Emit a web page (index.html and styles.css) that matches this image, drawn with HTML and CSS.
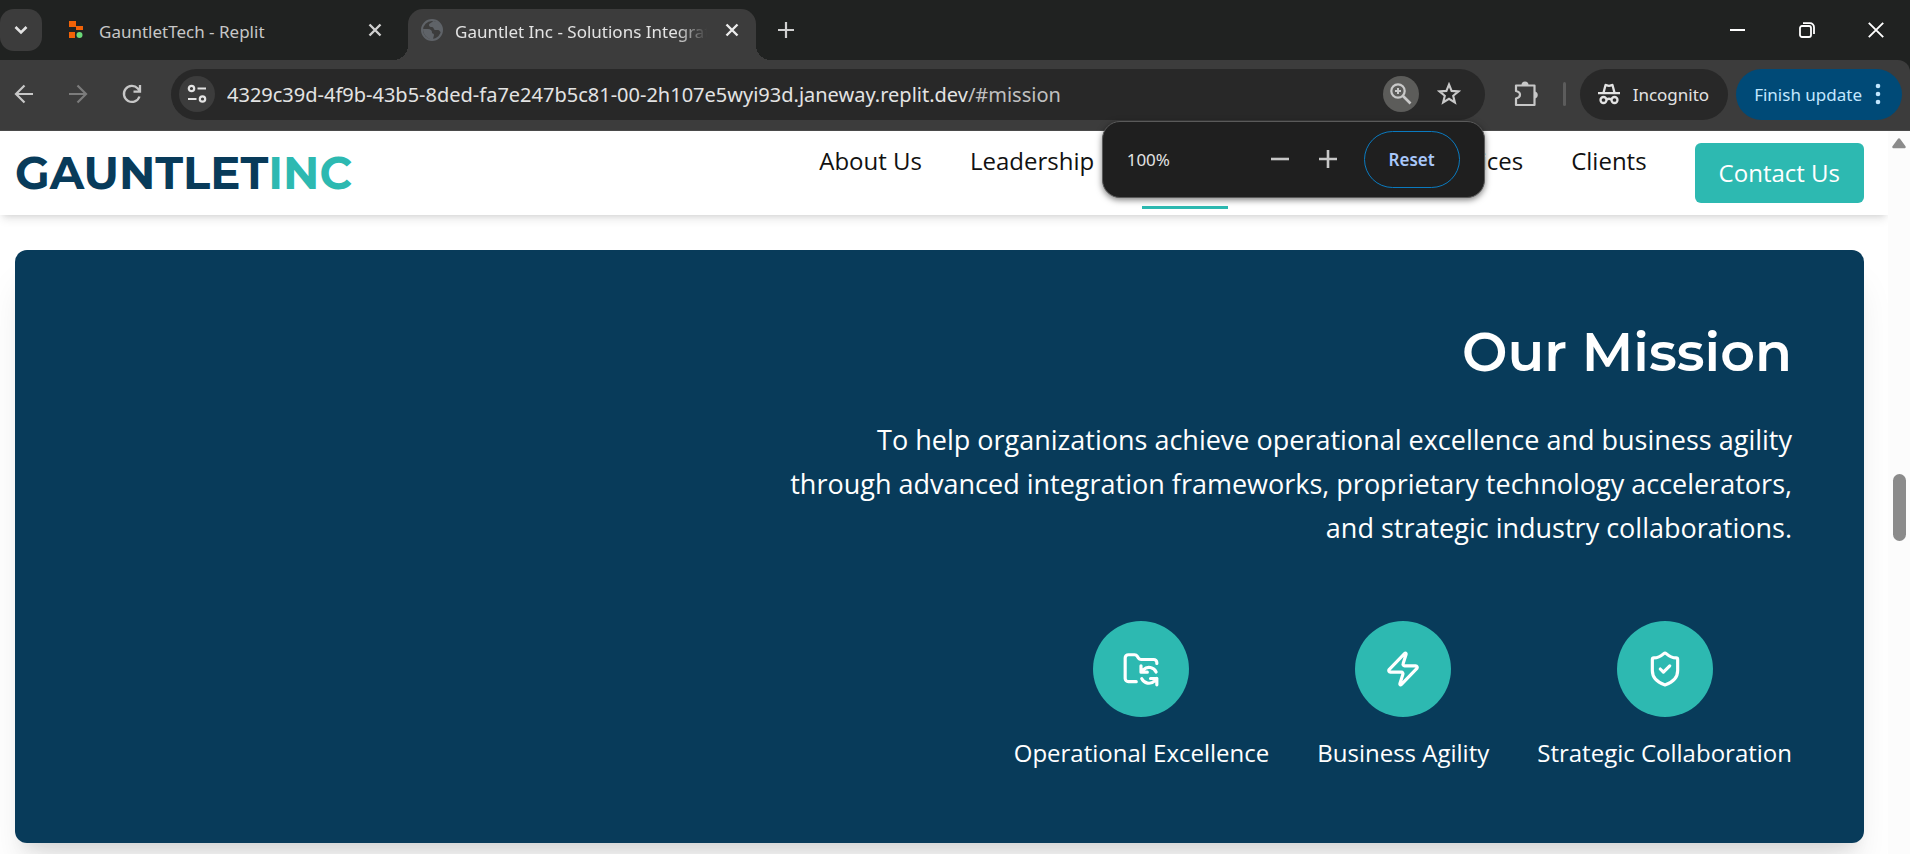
FILE: index.html
```html
<!DOCTYPE html>
<html lang="en">
<head>
<meta charset="utf-8">
<title>Gauntlet Inc - Solutions Integration</title>
<link rel="stylesheet" href="styles.css">
</head>
<body>
<div class="window">
  <div class="tab-strip">
    <button class="tab-search" aria-label="Search tabs"><svg width="14" height="14" viewBox="0 0 14 14"><path d="M1.5 4 7 9.500 12.500 4" fill="none" stroke="#e3e3e3" stroke-width="2.600"/></svg></button>
    <div class="tab">
      <svg class="favicon" width="22" height="22" viewBox="0 0 22 22"><path fill="#f26207" d="M4 2h7v6H4zM11 7h7v4h-7zM4 13h6v6H4z"/><circle cx="14.500" cy="16" r="3" fill="#6bd878"/></svg>
      <span class="tab-title">GauntletTech - Replit</span>
      <button class="tab-close" aria-label="Close tab"><svg width="14" height="14" viewBox="0 0 14 14"><path d="M1.500 1.500l11 11M12.500 1.500l-11 11" stroke="#d0d0d0" stroke-width="2.400"/></svg></button>
    </div>
    <div class="tab tab-active">
      <svg class="favicon" width="22" height="22" viewBox="0 0 22 22"><circle cx="11" cy="11" r="10" fill="#3c3c3c" stroke="#5f6368" stroke-width="2"/><path fill="#5f6368" d="M12 2c-1 2-4 2-4 4 0 1.500 1 2 3 2s1.500 3 3 3h3c1.500 0 2 2 3 2 1-4 0-8-4-10zM2 10h5c2.500 0 4 1.500 4 3.500 0 1.500 2 .5 2 2.500l-1 4c-5 1-10-4-10-10z"/></svg>
      <span class="tab-title">Gauntlet Inc - Solutions Integration</span>
      <button class="tab-close" aria-label="Close tab"><svg width="14" height="14" viewBox="0 0 14 14"><path d="M1.500 1.500l11 11M12.500 1.500l-11 11" stroke="#ececec" stroke-width="2.400"/></svg></button>
    </div>
    <button class="new-tab" aria-label="New tab"><svg width="16" height="16" viewBox="0 0 16 16"><path d="M8 0v16M0 8h16" stroke="#d0d0d0" stroke-width="2.200"/></svg></button>
    <div class="window-controls">
      <button aria-label="Minimize"><svg width="16" height="16" viewBox="0 0 16 16"><path d="M0 8h15" stroke="#fff" stroke-width="2"/></svg></button>
      <button aria-label="Restore"><svg width="16" height="16" viewBox="0 0 16 16" fill="none" stroke="#fff" stroke-width="1.800"><rect x="1" y="4" width="11" height="11" rx="2"/><path d="M4 1.200h7a4 4 0 0 1 4 4V12"/></svg></button>
      <button aria-label="Close"><svg width="16" height="16" viewBox="0 0 16 16"><path d="M.8.8l14.400 14.400M15.200.8.8 15.200" stroke="#fff" stroke-width="1.900"/></svg></button>
    </div>
  </div>

  <div class="toolbar">
    <div class="nav-buttons">
      <button class="icon-button" aria-label="Back"><svg width="20" height="20" viewBox="0 0 20 20"><path d="M19 10H2M10.500 1.500 2 10l8.500 8.500" fill="none" stroke="#c7c7c7" stroke-width="2.200"/></svg></button>
      <button class="icon-button" aria-label="Forward"><svg width="20" height="20" viewBox="0 0 20 20"><path d="M1 10h17M9.500 1.500 18 10l-8.500 8.500" fill="none" stroke="#7c7c7c" stroke-width="2.200"/></svg></button>
      <button class="icon-button" aria-label="Reload"><svg width="20" height="20" viewBox="0 0 20 20"><path d="M17.500 12.500A8 8 0 1 1 15.800 4.500L18 7M18 1v6.600h-6.500" fill="none" stroke="#c7c7c7" stroke-width="2.300"/></svg></button>
    </div>
    <div class="omnibox">
      <button class="round-button site-info" aria-label="View site information"><svg width="20" height="20" viewBox="0 0 20 20" fill="none" stroke="#e3e3e3" stroke-width="2.200"><circle cx="4.500" cy="4.500" r="2.700"/><path d="M10.500 4.500H19M1 15h8.500"/><circle cx="15.500" cy="15" r="2.700"/></svg></button>
      <div class="url">4329c39d-4f9b-43b5-8ded-fa7e247b5c81-00-2h107e5wyi93d.janeway.replit.dev<span class="url-path">/#mission</span></div>
      <button class="round-button zoom-indicator" aria-label="Zoom: 100%"><svg width="22" height="22" viewBox="0 0 22 22" fill="none" stroke="#c9c9c9"><circle cx="8" cy="8" r="6.700" stroke-width="2.200"/><path d="M13 13l7.500 7.500" stroke-width="2.600"/><path d="M8 5v6M5 8h6" stroke-width="2"/></svg></button>
      <button class="round-button" aria-label="Bookmark this tab"><svg width="24" height="24" viewBox="0 0 24 24"><path d="m12 2.500 2.600 6.400 6.900.5-5.300 4.400 1.700 6.700-5.900-3.700-5.900 3.700 1.700-6.700-5.300-4.400 6.900-.5z" fill="none" stroke="#c9c9c9" stroke-width="2.100"/></svg></button>
      <div class="zoom-popup">
        <span class="zoom-value">100%</span>
        <button class="zoom-step" aria-label="Zoom out"><svg width="20" height="20" viewBox="0 0 20 20"><path d="M1 10h18" stroke="#c7c7c7" stroke-width="2.600"/></svg></button>
        <button class="zoom-step" aria-label="Zoom in"><svg width="20" height="20" viewBox="0 0 20 20"><path d="M1 10h18M10 1v18" stroke="#c7c7c7" stroke-width="2.600"/></svg></button>
        <button class="zoom-reset">Reset</button>
      </div>
    </div>
    <button class="icon-button extensions" aria-label="Extensions"><svg width="28" height="26" viewBox="0 0 28 26"><path d="M4 4.500h18.500v19.500H4v-6.500q4-1 4-3.800T4 10z" fill="none" stroke="#c7c7c7" stroke-width="2.200" stroke-linejoin="round"/><path d="M9.500 4a3.500 3.500 0 0 1 7 0zM23 10.500a3.600 3.600 0 0 1 0 7z" fill="#c7c7c7"/></svg></button>
    <span class="divider"></span>
    <button class="pill incognito"><svg width="22" height="22" viewBox="0 0 22 22"><path d="M6.500 1.500Q7 .5 8.500 1l2.500.7 2.500-.7q1.500-.5 2 .5L17.500 9H22v2.300H0V9h4.500zM8.300 3.400 6.900 9h8.200l-1.400-5.600-2.700.7z" fill="#e3e3e3" fill-rule="evenodd"/><g fill="none" stroke="#e3e3e3" stroke-width="2.300"><circle cx="5.500" cy="17" r="3"/><circle cx="16.500" cy="17" r="3"/><path d="M8.500 16.500q2.500-1.500 5 0"/></g></svg>Incognito</button>
    <button class="pill update">Finish update<svg width="6" height="22" viewBox="0 0 6 22" fill="#c2e7ff"><circle cx="3" cy="3" r="2.300"/><circle cx="3" cy="11" r="2.300"/><circle cx="3" cy="19" r="2.300"/></svg></button>
  </div>

  <div class="viewport">
    <div class="page">
      <header class="site-header">
        <a class="logo" href="#home">GAUNTLET<span class="logo-accent">INC</span></a>
        <nav class="site-nav">
          <a class="nav-link" href="#about">About Us</a>
          <a class="nav-link" href="#leadership">Leadership</a>
          <a class="nav-link nav-link-current" href="#mission">Mission</a>
          <a class="nav-link" href="#approach">Approach</a>
          <a class="nav-link" href="#services">Services</a>
          <a class="nav-link" href="#clients">Clients</a>
          <a class="contact" href="#contact">Contact Us</a>
        </nav>
      </header>
      <main>
        <section class="mission" id="mission">
          <h1 class="mission-title">Our Mission</h1>
          <p class="mission-text">To help organizations achieve operational excellence and business agility through advanced integration frameworks, proprietary technology accelerators, and strategic industry collaborations.</p>
          <ul class="values">
            <li class="value"><span class="value-icon"><svg viewBox="0 0 24 24"><path d="M9 20H4a2 2 0 0 1-2-2V5a2 2 0 0 1 2-2h3.900a2 2 0 0 1 1.690.9l.81 1.200a2 2 0 0 0 1.670.9H20a2 2 0 0 1 2 2v.5M12 10v4h4M12 14l1.535-1.605a5 5 0 0 1 8 1.500M22 22v-4h-4M22 18l-1.535 1.605a5 5 0 0 1-8-1.500"/></svg></span>Operational Excellence</li>
            <li class="value"><span class="value-icon"><svg viewBox="0 0 24 24"><path d="M4 14a1 1 0 0 1-.78-1.630l9.900-10.200a.5.5 0 0 1 .86.46l-1.920 6.020A1 1 0 0 0 13 10h7a1 1 0 0 1 .78 1.630l-9.900 10.200a.5.5 0 0 1-.86-.46l1.920-6.020A1 1 0 0 0 11 14z"/></svg></span>Business Agility</li>
            <li class="value"><span class="value-icon"><svg viewBox="0 0 24 24"><path d="M20 13c0 5-3.500 7.500-7.660 8.950a1 1 0 0 1-.67-.01C7.500 20.500 4 18 4 13V6a1 1 0 0 1 1-1c2 0 4.500-1.200 6.240-2.720a1.170 1.170 0 0 1 1.520 0C14.510 3.810 17 5 19 5a1 1 0 0 1 1 1zM9 12l2 2 4-4"/></svg></span>Strategic Collaboration</li>
          </ul>
        </section>
      </main>
    </div>
    <div class="scrollbar">
      <svg class="scroll-arrow" width="16" height="12" viewBox="0 0 16 12"><path d="M8 2.500 13.500 10h-11z" fill="#8b8b8b" stroke="#8b8b8b" stroke-width="2.500" stroke-linejoin="round"/></svg>
      <span class="scroll-thumb"></span>
    </div>
  </div>
</div>
</body>
</html>
```
FILE: styles.css
```css
* {
  box-sizing: border-box;
}

body {
  margin: 0;
  font-family: "Open Sans", sans-serif;
}

button {
  padding: 0;
  border: 0;
  background: none;
  color: inherit;
  font: inherit;
}

svg {
  display: block;
  flex: none;
}

.window {
  height: 100vh;
  display: flex;
  flex-direction: column;
  overflow: hidden;
  background: #202221;
}

/* Tab strip */
.tab-strip {
  flex: none;
  height: 60px;
  display: flex;
  padding-top: 9px;
  font-family: "Noto Sans", sans-serif;
}

.tab-search {
  width: 42px;
  height: 42px;
  display: grid;
  place-items: center;
  border-radius: 14px;
  background: #3c3c3c;
}

.tab {
  width: 366px;
  display: flex;
  align-items: center;
  padding: 0 25px 9px 23px;
  color: #c7c7c7;
  font-size: 17px;
}

.tab-title {
  flex: 1;
  min-width: 0;
  margin: 2px 20px 0 12px;
  overflow: hidden;
  white-space: nowrap;
}

.tab-close {
  width: 16px;
  height: 16px;
  display: grid;
  place-items: center;
}

.tab-active {
  position: relative;
  width: 348px;
  padding: 0 16px 9px 13px;
  border-radius: 15px 15px 0 0;
  background: #3c3c3c;
  color: #e3e3e3;
}

.tab-active .tab-title {
  margin-right: 17px;
  -webkit-mask-image: linear-gradient(to right, #000 88%, transparent);
  mask-image: linear-gradient(to right, #000 88%, transparent);
}

.tab-active::before,
.tab-active::after {
  content: "";
  position: absolute;
  bottom: 0;
  width: 15px;
  height: 15px;
}

.tab-active::before {
  right: 100%;
  background: radial-gradient(circle at 0 0, transparent 15px, #3c3c3c 15px);
}

.tab-active::after {
  left: 100%;
  background: radial-gradient(circle at 100% 0, transparent 15px, #3c3c3c 15px);
}

.new-tab {
  width: 42px;
  height: 42px;
  margin-left: 9px;
  display: grid;
  place-items: center;
}

.window-controls {
  margin-left: auto;
  display: flex;
}

.window-controls button {
  width: 69px;
  height: 42px;
  display: grid;
  place-items: center;
}

/* Toolbar */
.toolbar {
  flex: none;
  height: 71px;
  display: flex;
  align-items: center;
  padding: 0 8px 2px 6px;
  border-bottom: 1px solid #4a4a4a;
  border-top-right-radius: 12px;
  background: #3c3c3c;
  font-family: "Noto Sans", sans-serif;
}

.nav-buttons {
  display: flex;
  gap: 18px;
}

.icon-button,
.round-button {
  flex: none;
  width: 36px;
  height: 36px;
  display: grid;
  place-items: center;
  border-radius: 50%;
}

.omnibox {
  position: relative;
  flex: 1;
  min-width: 0;
  height: 51px;
  margin-left: 21px;
  padding: 0 18px 0 8px;
  display: flex;
  align-items: center;
  gap: 12px;
  border-radius: 26px;
  background: #282828;
}

.site-info {
  background: #3c3c3c;
}

.zoom-indicator {
  background: #5c5c5a;
}

.url {
  flex: 1;
  min-width: 0;
  overflow: hidden;
  white-space: nowrap;
  color: #e3e3e3;
  font-size: 20px;
}

.url-path {
  color: #c0c0c0;
}

.zoom-popup {
  position: absolute;
  z-index: 5;
  top: 52px;
  right: 0;
  width: 383px;
  height: 77px;
  padding: 0 24px;
  display: flex;
  align-items: center;
  border: 1px solid #5a5a5a;
  border-radius: 18px;
  background: #1f1f1f;
  box-shadow: 0 2px 6px rgba(0, 0, 0, 0.5);
  color: #e3e3e3;
}

.zoom-value {
  flex: 1;
  font-size: 17px;
}

.zoom-step {
  width: 48px;
  height: 48px;
  display: grid;
  place-items: center;
}

.zoom-reset {
  width: 96px;
  height: 57px;
  margin-left: 12px;
  border: 1px solid #0a7abf;
  border-radius: 29px;
  color: #a8c7fa;
  font-size: 17px;
  font-weight: 600;
}

.extensions {
  margin-left: 23px;
}

.divider {
  width: 3px;
  height: 24px;
  margin: 0 14px 0 19px;
  border-radius: 2px;
  background: #5c5c5c;
}

.pill {
  height: 51px;
  display: flex;
  align-items: center;
  gap: 13px;
  border-radius: 26px;
  font-size: 17px;
  white-space: nowrap;
}

.incognito {
  padding: 0 19px 0 18px;
  background: #282828;
  color: #e3e3e3;
}

.update {
  margin-left: 8px;
  padding: 0 21px 0 18px;
  background: #004a77;
  color: #c2e7ff;
}

/* Page */
.viewport {
  flex: 1;
  min-height: 0;
  display: flex;
  background: #fff;
}

.page {
  flex: 1;
  min-width: 0;
  overflow: hidden;
}

.site-header {
  position: relative;
  display: flex;
  align-items: center;
  justify-content: space-between;
  padding: 12px 24px 12px 15px;
  background: #fff;
  box-shadow: 0 6px 9px -2px rgba(0, 0, 0, 0.1), 0 3px 6px -3px rgba(0, 0, 0, 0.1);
}

.logo {
  color: #083b5a;
  font-family: Montserrat, Inter, sans-serif;
  font-size: 45px;
  font-weight: 700;
  line-height: 60px;
  text-decoration: none;
}

.logo-accent {
  color: #2db9b1;
}

.site-nav {
  display: flex;
  gap: 48px;
  font-size: 24px;
  line-height: 36px;
}

.nav-link {
  position: relative;
  color: #111;
  text-decoration: none;
}

.nav-link-current::after {
  content: "";
  position: absolute;
  left: 0;
  right: 0;
  bottom: -6px;
  height: 3px;
  background: #2db9b1;
}

.contact {
  padding: 12px 24px;
  border-radius: 6px;
  background: #2db9b1;
  color: #fff;
  text-decoration: none;
}

.mission {
  margin: 35px 24px 48px 15px;
  padding: 66px 72px 72px;
  display: flex;
  flex-direction: column;
  align-items: flex-end;
  border-radius: 12px;
  background: #083b5a;
  box-shadow: 0 30px 38px -8px rgba(0, 0, 0, 0.1), 0 12px 15px -9px rgba(0, 0, 0, 0.1);
  color: #fff;
}

.mission-title {
  margin: 0 0 30px;
  font-family: Montserrat, Inter, sans-serif;
  font-size: 54px;
  font-weight: 600;
  line-height: 72px;
}

.mission-text {
  max-width: 1008px;
  margin: 0 0 71px;
  font-size: 27px;
  line-height: 44px;
  text-align: right;
}

.values {
  display: flex;
  gap: 48px;
  margin: 0;
  padding: 0;
  list-style: none;
  font-size: 24px;
  line-height: 36px;
}

.value {
  display: flex;
  flex-direction: column;
  align-items: center;
  gap: 18px;
}

.value-icon {
  width: 96px;
  height: 96px;
  display: grid;
  place-items: center;
  border-radius: 50%;
  background: #2db9b1;
}

.value-icon svg {
  width: 38px;
  height: 38px;
  fill: none;
  stroke: #fff;
  stroke-width: 2;
  stroke-linecap: round;
  stroke-linejoin: round;
}

/* Scrollbar */
.scrollbar {
  flex: none;
  width: 22px;
  padding-top: 6px;
  display: grid;
  grid-template-rows: 12px 325fr 67px 313fr;
  justify-items: center;
  background: #fcfcfc;
}

.scroll-thumb {
  grid-row: 3;
  width: 13px;
  border-radius: 7px;
  background: #8b8b8b;
}
```
